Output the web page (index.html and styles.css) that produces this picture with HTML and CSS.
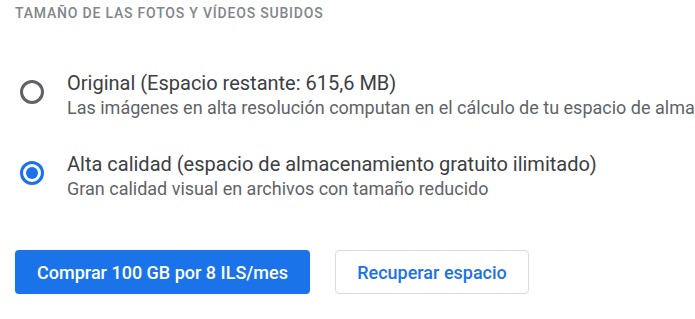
FILE: index.html
```html
<!DOCTYPE html>
<html lang="es">
<head>
  <meta charset="UTF-8" />
  <title>Tamaño de subida</title>
  <link rel="stylesheet" href="styles.css">
</head>
<body>
  <div class="panel">
    <div class="heading">Tamaño de las fotos y vídeos subidos</div>
    <div class="options">
      <label class="option">
        <span class="radio"></span>
        <span class="text">
          <span class="title">Original (Espacio restante: 615,6 MB)</span>
          <span class="desc">Las imágenes en alta resolución computan en el cálculo de tu espacio de almacenamiento</span>
        </span>
      </label>
      <label class="option">
        <span class="radio checked"></span>
        <span class="text">
          <span class="title">Alta calidad (espacio de almacenamiento gratuito ilimitado)</span>
          <span class="desc">Gran calidad visual en archivos con tamaño reducido</span>
        </span>
      </label>
    </div>
    <div class="actions">
      <button class="btn primary">Comprar 100 GB por 8 ILS/mes</button>
      <button class="btn outline">Recuperar espacio</button>
    </div>
  </div>
</body>
</html>
```

FILE: styles.css
```css
* {
  margin: 0;
  padding: 0;
  box-sizing: border-box;
}
html, body {
  width: 100%;
  height: 100%;
  background: #fff;
  font-family: Roboto, Arial, sans-serif;
  overflow: hidden;
}
.panel {
  padding: 5px 0 0 15px;
  white-space: nowrap;
}
.heading {
  font-size: 14px;
  font-weight: 500;
  letter-spacing: 0.8px;
  text-transform: uppercase;
  color: #80868b;
  line-height: 16px;
}
.options {
  margin-top: 49px;
  display: flex;
  flex-direction: column;
  gap: 31px;
}
.option {
  display: flex;
  align-items: flex-start;
  gap: 23px;
}
.radio {
  width: 24px;
  height: 24px;
  margin: 10px 0 0 5px;
  border: 3px solid #5f6368;
  border-radius: 50%;
  flex: none;
  display: flex;
  align-items: center;
  justify-content: center;
}
.radio.checked {
  border-color: #1a73e8;
}
.radio.checked::after {
  content: "";
  width: 12px;
  height: 12px;
  border-radius: 50%;
  background: #1a73e8;
}
.text {
  display: flex;
  flex-direction: column;
}
.title {
  font-size: 20px;
  line-height: 26px;
  color: #3c4043;
}
.desc {
  font-size: 18px;
  line-height: 24px;
  color: #5f6368;
}
.actions {
  margin-top: 49px;
  display: flex;
  gap: 25px;
}
.btn {
  height: 44px;
  padding: 0 20px;
  border-radius: 4px;
  font-family: Roboto, Arial, sans-serif;
  font-size: 18px;
  font-weight: 500;
}
.primary {
  width: 295px;
  background: #1a73e8;
  color: #fff;
  border: none;
}
.outline {
  width: 194px;
  background: #fff;
  color: #1a73e8;
  border: 1px solid #dadce0;
}
```
